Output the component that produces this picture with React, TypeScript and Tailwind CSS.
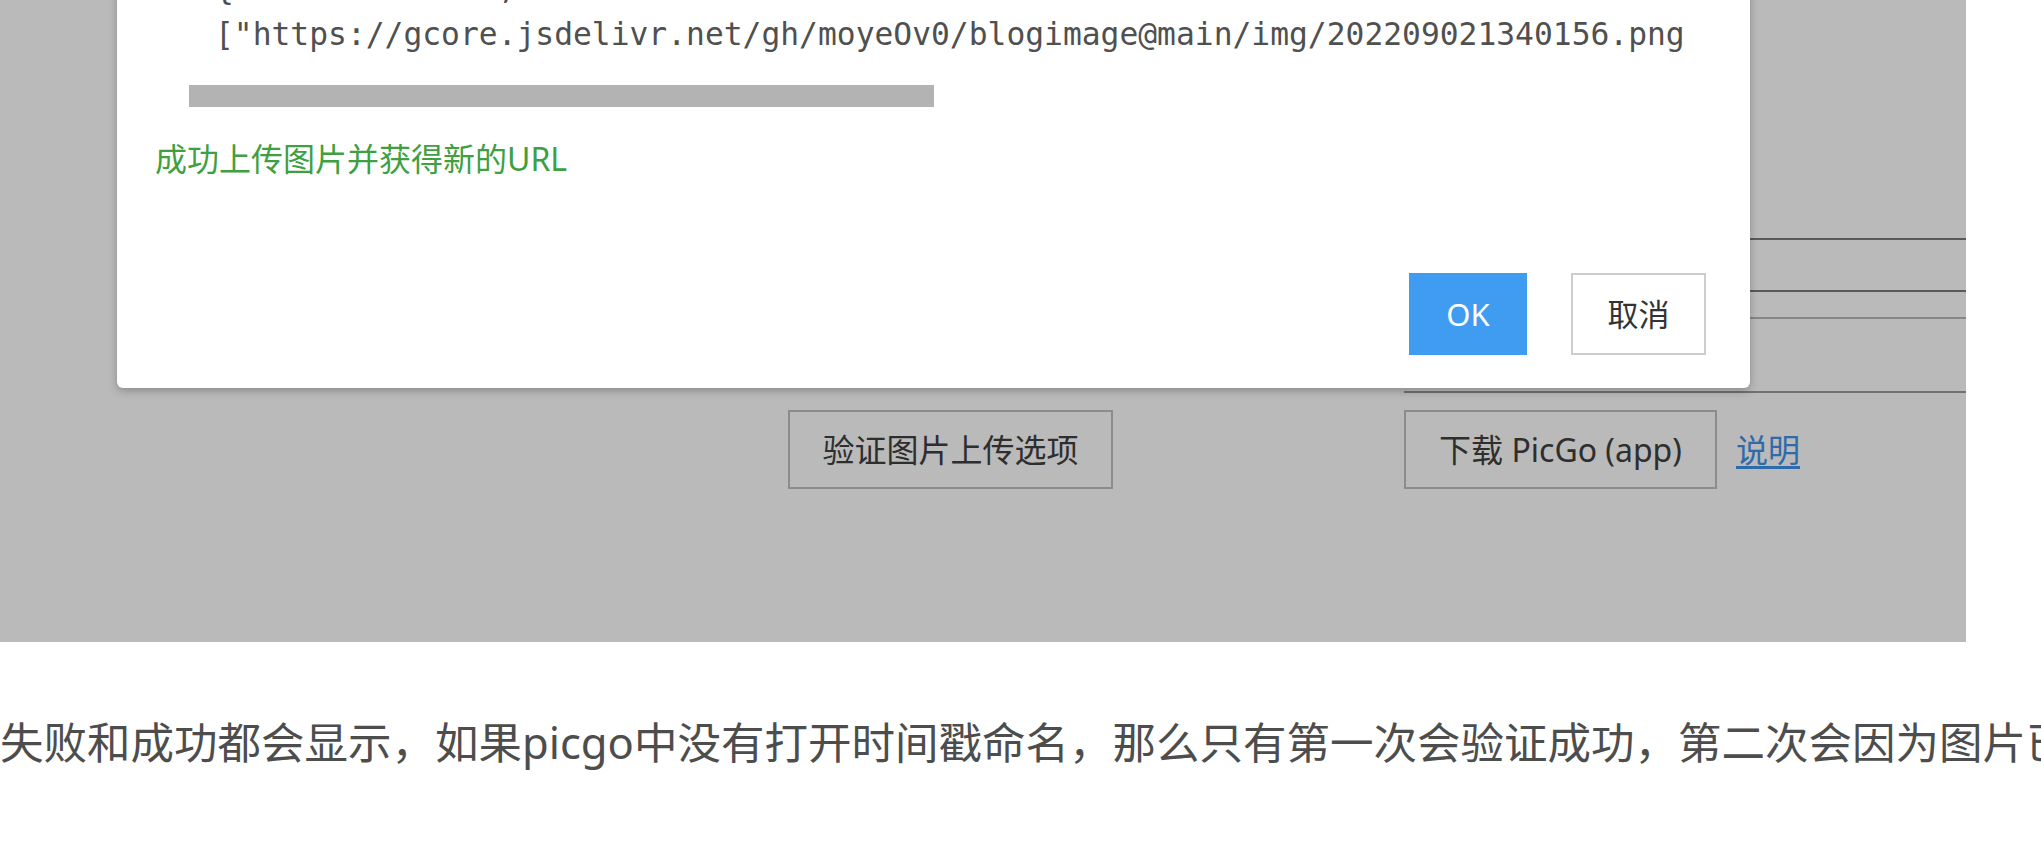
import React from "react";

const sans = { fontFamily: '"Noto Sans", "Noto Sans CJK SC", sans-serif' };
const mono = { fontFamily: '"DejaVu Sans Mono", "Liberation Mono", monospace' };

export default function App() {
  return (
    <div className="w-[2041px] h-[843px] bg-white overflow-hidden" style={sans}>
      <div className="relative w-[1966px] h-[642px] bg-[#bababa] overflow-hidden">
        {/* underlying page (dimmed) */}
        <div className="flex flex-col">
          <div className="ml-[1404px] w-[562px] pt-[238px] flex flex-col">
            <div className="h-[52px] border-t-2 border-[#5a5a5a]" />
            <div className="h-[27px] border-t-2 border-[#5a5a5a]" />
            <div className="h-[74px] border-t-2 border-[#878787]" />
            <div className="border-t-2 border-[#727272]" />
          </div>
          <div className="flex items-center mt-[17px] ml-[788px]">
            <div className="w-[325px] h-[79px] border-2 border-[#8c8c8c] flex items-center justify-center text-[32px] text-[#2e2e2e]">
              验证图片上传选项
            </div>
            <div className="ml-[291px] w-[313px] h-[79px] border-2 border-[#8c8c8c] flex items-center justify-center text-[32px] text-[#2e2e2e]">
              下载 PicGo (app)
            </div>
            <span className="ml-[19px] text-[32px] text-[#2f6aa9] underline underline-offset-4">说明</span>
          </div>
        </div>

        {/* dialog */}
        <div className="absolute left-[117px] top-[-66px] w-[1633px] h-[454px] bg-white rounded-[6px] shadow-[0_3px_8px_rgba(0,0,0,0.25)] flex flex-col pt-[40px]">
          <div className="ml-[72px] w-[1497px] overflow-hidden">
            <div className="pl-[26px] text-[31.3px] leading-[40px] text-[#505050] whitespace-nowrap" style={mono}>
              <div className="-mt-[6px] mb-[6px]">{'{"success":true,"result":'}</div>
              <div>{'["https://gcore.jsdelivr.net/gh/moyeOv0/blogimage@main/img/202209021340156.png"]}'}</div>
            </div>
            <div className="mt-[31px] w-[745px] h-[22px] bg-[#b3b3b3]" />
          </div>
          <div className="mt-[28px] ml-[38px] text-[32px] leading-[48px] text-[#3f9f41]">
            成功上传图片并获得新的URL
          </div>
          <div className="mt-[90px] flex justify-end pr-[44px] gap-[44px]">
            <div className="w-[118px] h-[82px] bg-[#3f9cf1] text-white text-[31px] flex items-center justify-center">
              OK
            </div>
            <div className="w-[135px] h-[82px] bg-white border-2 border-[#cdcdcd] text-[#333] text-[31px] flex items-center justify-center">
              取消
            </div>
          </div>
        </div>
      </div>
      <p className="mt-[70px] text-[43.5px] leading-[60px] text-[#4d4d4d] whitespace-nowrap">
        失败和成功都会显示，如果picgo中没有打开时间戳命名，那么只有第一次会验证成功，第二次会因为图片已存在而失败。
      </p>
    </div>
  );
}
